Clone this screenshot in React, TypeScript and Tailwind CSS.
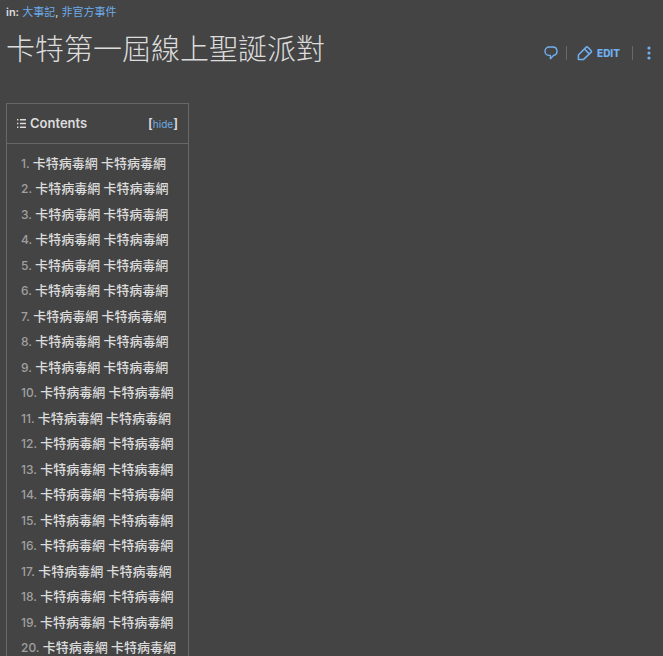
const categories = ['大事記', '非官方事件'];

const sections = Array.from({ length: 20 }, (_, i) => ({
  id: i + 1,
  title: '卡特病毒網 卡特病毒網',
}));

function CommentIcon() {
  return (
    <svg width="14" height="14" viewBox="0 0 14 14" fill="none" stroke="currentColor" strokeWidth="1.4" strokeLinejoin="round">
      <path d="M5.2 1h3.6a4.2 4.2 0 0 1 .9 8.3L6.4 12.8V9.4H5.2A4.2 4.2 0 0 1 5.2 1Z" />
    </svg>
  );
}

function PencilIcon() {
  return (
    <svg width="16" height="16" viewBox="0 0 16 16" fill="none" stroke="currentColor" strokeWidth="1.5" strokeLinejoin="round">
      <path d="M1.4 14.4V10L9.2 2.1a1 1 0 0 1 1.4 0l3.6 3.6a1 1 0 0 1 0 1.4L6.6 14.4Z" />
      <path d="M7.4 4 12.3 8.9" />
    </svg>
  );
}

function MoreIcon() {
  return (
    <svg width="4" height="14" viewBox="0 0 4 14" fill="currentColor">
      <circle cx="2" cy="2" r="1.6" />
      <circle cx="2" cy="7" r="1.6" />
      <circle cx="2" cy="12" r="1.6" />
    </svg>
  );
}

function ListIcon() {
  return (
    <svg width="9" height="9" viewBox="0 0 9 9" fill="currentColor">
      <path d="M0 0h1.4v1.4H0zM3 0h6v1.4H3zM0 3.8h1.4v1.4H0zM3 3.8h6v1.4H3zM0 7.6h1.4V9H0zM3 7.6h6V9H3z" />
    </svg>
  );
}

function PageHeader() {
  return (
    <header className="pl-1.5 pt-1">
      <div className="text-[11px] leading-4">
        <span className="font-semibold">in:</span>{' '}
        {categories.map((name, i) => (
          <span key={name}>
            {i > 0 && ', '}
            <a href="#" className="text-[#6cabe8]">{name}</a>
          </span>
        ))}
      </div>
      <div className="flex items-center justify-between">
        <h1 className="text-[29px] leading-[60px] font-light">卡特第一屆線上聖誕派對</h1>
        <div className="flex items-center pt-1.5 text-[#70b0f0]">
          <button type="button" aria-label="Comments"><CommentIcon /></button>
          <span className="ml-2 h-3.5 w-px bg-[#686868]" />
          <button type="button" className="ml-2.5 flex items-center gap-1 text-[10px] font-extrabold">
            <PencilIcon />
            EDIT
          </button>
          <span className="ml-3 h-3.5 w-px bg-[#686868]" />
          <button type="button" aria-label="More" className="ml-3.5 mr-3"><MoreIcon /></button>
        </div>
      </div>
    </header>
  );
}

function Contents() {
  return (
    <nav className="ml-1.5 mt-[23px] w-[183px] border border-[#686868]">
      <div className="flex h-10 items-center border-b border-[#686868] px-2.5">
        <ListIcon />
        <h2 className="ml-1 text-[13px] font-semibold">Contents</h2>
        <span className="ml-auto text-[13px] font-semibold">
          [<button type="button" className="text-[10px] font-normal text-[#6cabe8]">hide</button>]
        </span>
      </div>
      <ol className="px-3.5 pt-[7px] font-['Roboto','Noto_Sans_CJK_TC',sans-serif] text-[13px] leading-[25px] font-medium">
        {sections.map(({ id, title }) => (
          <li key={id} className="whitespace-nowrap even:pb-px">
            <a href="#">
              <span className="font-['Inter',sans-serif] text-[12px] text-[#a0a0a0]">{id}.</span> {title}
            </a>
          </li>
        ))}
      </ol>
    </nav>
  );
}

export default function App() {
  return (
    <div className="h-screen overflow-hidden bg-[#444] font-['Inter','Noto_Sans_CJK_TC',sans-serif] text-[#dcdcdc]">
      <PageHeader />
      <Contents />
    </div>
  );
}
